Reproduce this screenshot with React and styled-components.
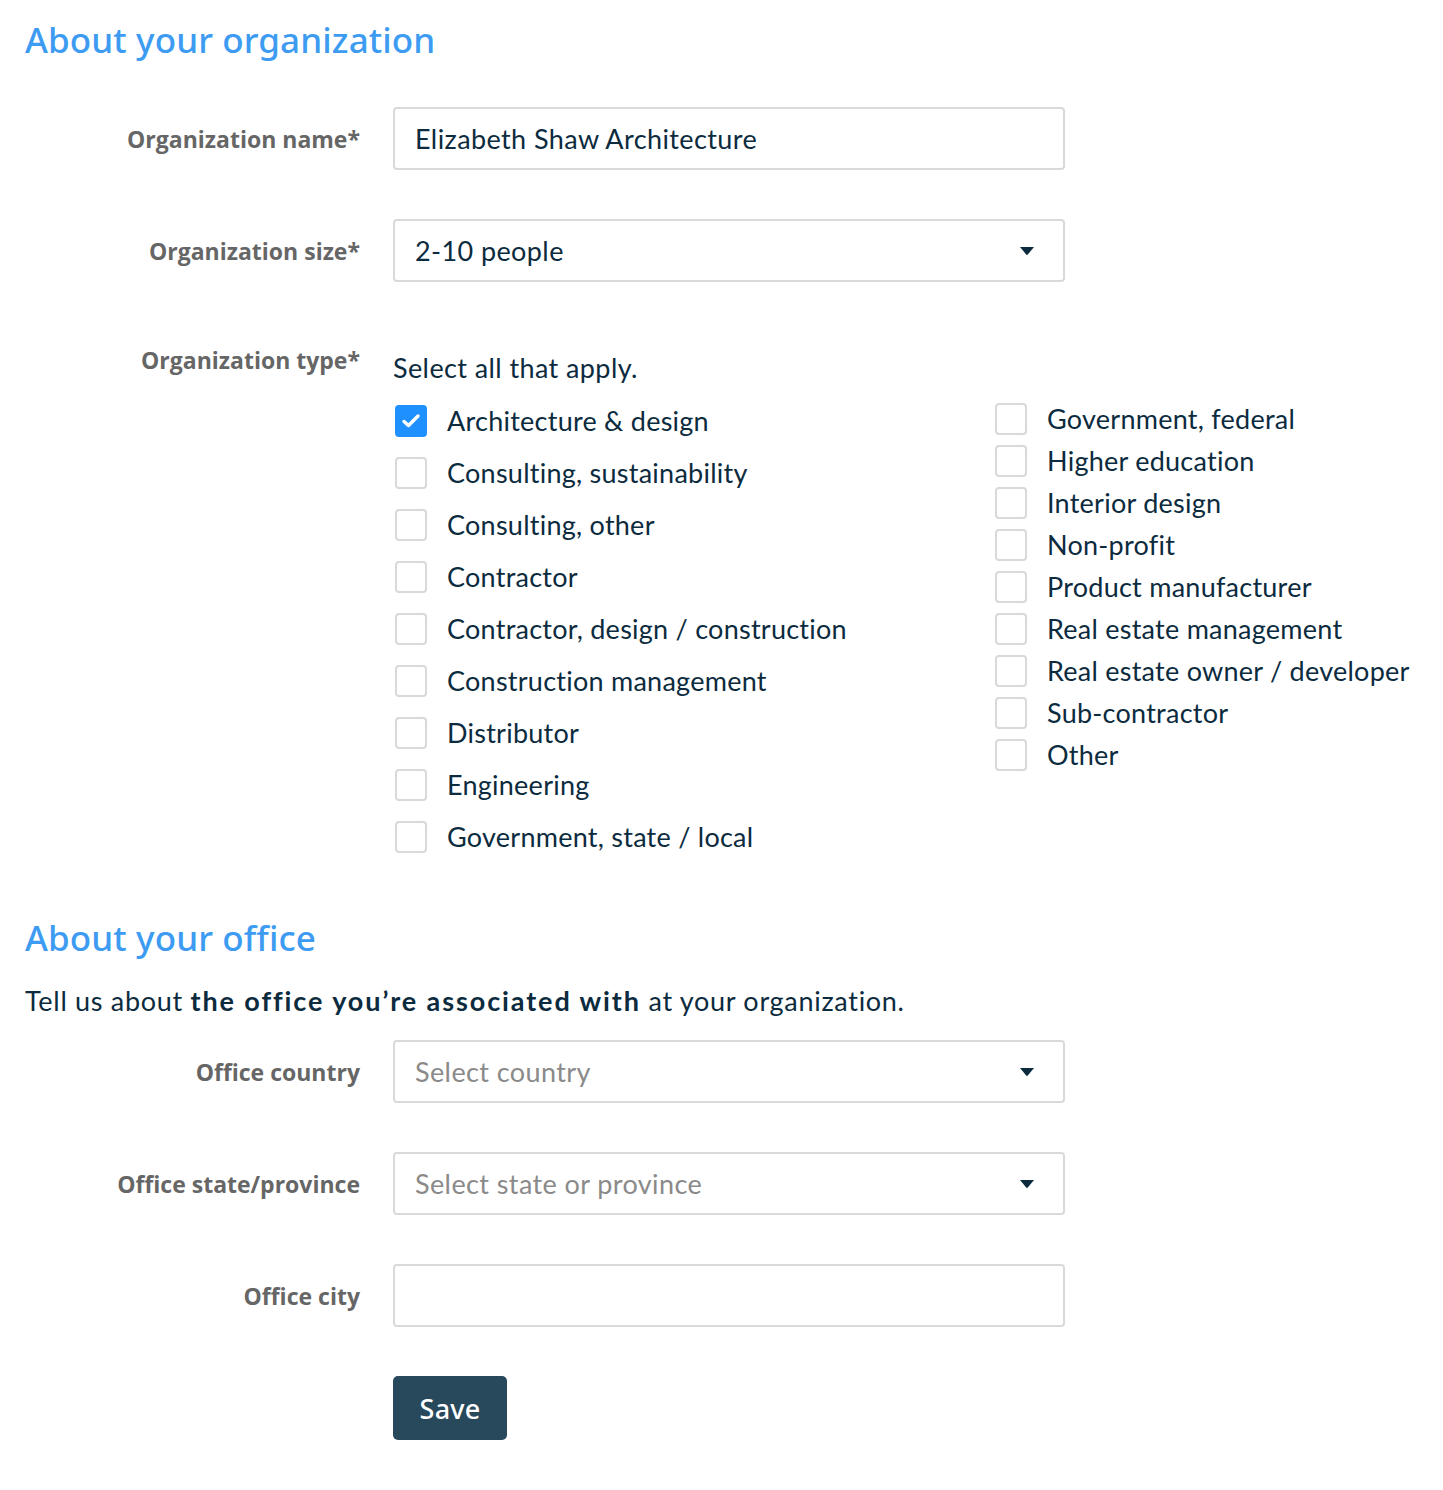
import React, { useState } from "react";
import styled, { createGlobalStyle } from "styled-components";

const colors = {
  blue: "#3d9cf2",
  check: "#1e90ff",
  text: "#0c2b3e",
  label: "#666666",
  border: "#d9d9d9",
  placeholder: "#8a8a8a",
  button: "#27495b",
  white: "#ffffff",
};

const GlobalStyle = createGlobalStyle`
  body {
    margin: 0;
    background: ${colors.white};
    font-family: "Lato", "Noto Sans", sans-serif;
    color: ${colors.text};
    letter-spacing: 0.4px;
  }
`;

const Page = styled.div`
  width: 1443px;
  padding: 18px 0 40px 25px;
  box-sizing: border-box;
`;

const Heading = styled.h2`
  margin: ${({ $top }) => $top || 0}px 0 0;
  font-family: "Noto Sans", sans-serif;
  font-weight: 500;
  font-size: 35px;
  line-height: 44px;
  color: ${colors.blue};
  letter-spacing: 0.1px;
`;

const Form = styled.div`
  display: grid;
  grid-template-columns: 335px 672px;
  column-gap: 33px;
  row-gap: 49px;
  margin-top: ${({ $top }) => $top}px;
  align-items: center;
`;

const Label = styled.div`
  text-align: right;
  font-family: "Open Sans", sans-serif;
  font-weight: 700;
  font-size: 23px;
  letter-spacing: 0;
  color: ${colors.label};
  align-self: ${({ $top }) => ($top ? "start" : "center")};
  padding-top: ${({ $top }) => ($top ? "13px" : "0")};
`;

const Field = styled.div`
  position: relative;
  height: 63px;
  box-sizing: border-box;
  border: 2px solid ${colors.border};
  border-radius: 4px;
  display: flex;
  align-items: center;
  padding: 0 20px;
  font-size: 27px;
  color: ${({ $placeholder }) => ($placeholder ? colors.placeholder : colors.text)};
  background: ${colors.white};
`;

const Caret = styled.svg`
  position: absolute;
  right: 28px;
  top: 50%;
  margin-top: -5px;
`;

const TypeBlock = styled.div`
  align-self: start;
`;

const Hint = styled.div`
  font-size: 27px;
  line-height: 32px;
  margin-top: 21px;
`;

const Columns = styled.div`
  display: flex;
  width: 1030px;
  margin-top: 21px;
`;

const Column = styled.div`
  width: 600px;
  display: flex;
  flex-direction: column;
  gap: ${({ $gap }) => $gap}px;
  margin-top: ${({ $shift }) => $shift}px;
  &:last-child {
    width: auto;
  }
`;

const CheckRow = styled.label`
  display: flex;
  align-items: center;
  gap: 20px;
  font-size: 27px;
  line-height: 32px;
  letter-spacing: 0.25px;
  cursor: pointer;
`;

const Box = styled.span`
  width: 32px;
  height: 32px;
  box-sizing: border-box;
  margin-left: 2px;
  border-radius: 4px;
  border: 2px solid ${({ $on }) => ($on ? colors.check : colors.border)};
  background: ${({ $on }) => ($on ? colors.check : colors.white)};
  display: flex;
  align-items: center;
  justify-content: center;
  flex: none;
`;

const Intro = styled.p`
  margin: 25px 0 0;
  font-size: 27px;
  line-height: 32px;
  letter-spacing: 0.7px;
  strong {
    font-weight: 700;
    letter-spacing: 1.9px;
  }
`;

const SaveButton = styled.button`
  grid-column: 2;
  justify-self: start;
  width: 114px;
  height: 64px;
  border: none;
  border-radius: 5px;
  background: ${colors.button};
  color: ${colors.white};
  font-family: "Noto Sans", sans-serif;
  font-weight: 500;
  font-size: 27px;
  letter-spacing: 0.2px;
  cursor: pointer;
`;

const leftTypes = [
  "Architecture & design",
  "Consulting, sustainability",
  "Consulting, other",
  "Contractor",
  "Contractor, design / construction",
  "Construction management",
  "Distributor",
  "Engineering",
  "Government, state / local",
];

const rightTypes = [
  "Government, federal",
  "Higher education",
  "Interior design",
  "Non-profit",
  "Product manufacturer",
  "Real estate management",
  "Real estate owner / developer",
  "Sub-contractor",
  "Other",
];

const CaretIcon = () => (
  <Caret width="16" height="10" viewBox="0 0 16 10">
    <path d="M1 1 H15 L8.8 8.6 Q8 9.4 7.2 8.6 Z" fill={colors.text} />
  </Caret>
);

const Check = ({ label, checked, onToggle }) => (
  <CheckRow onClick={onToggle}>
    <Box $on={checked}>
      {checked && (
        <svg width="20" height="16" viewBox="0 0 20 16">
          <path
            d="M3 8.5 L7.5 12.5 L17 3"
            fill="none"
            stroke="#fff"
            strokeWidth="3.4"
            strokeLinecap="round"
            strokeLinejoin="round"
          />
        </svg>
      )}
    </Box>
    {label}
  </CheckRow>
);

const App = () => {
  const [selected, setSelected] = useState({ "Architecture & design": true });
  const toggle = (name) => setSelected((s) => ({ ...s, [name]: !s[name] }));

  return (
    <Page>
      <GlobalStyle />
      <Heading>About your organization</Heading>
      <Form $top={45}>
        <Label>Organization name*</Label>
        <Field>Elizabeth Shaw Architecture</Field>
        <Label>Organization size*</Label>
        <Field>
          2-10 people
          <CaretIcon />
        </Field>
        <Label $top>Organization type*</Label>
        <TypeBlock>
          <Hint>Select all that apply.</Hint>
          <Columns>
            <Column $gap={20} $shift={0}>
              {leftTypes.map((t) => (
                <Check key={t} label={t} checked={!!selected[t]} onToggle={() => toggle(t)} />
              ))}
            </Column>
            <Column $gap={10} $shift={-2}>
              {rightTypes.map((t) => (
                <Check key={t} label={t} checked={!!selected[t]} onToggle={() => toggle(t)} />
              ))}
            </Column>
          </Columns>
        </TypeBlock>
      </Form>
      <Heading $top={63}>About your office</Heading>
      <Intro>
        Tell us about <strong>the office you’re associated with</strong> at your organization.
      </Intro>
      <Form $top={23}>
        <Label>Office country</Label>
        <Field $placeholder>
          Select country
          <CaretIcon />
        </Field>
        <Label>Office state/province</Label>
        <Field $placeholder>
          Select state or province
          <CaretIcon />
        </Field>
        <Label>Office city</Label>
        <Field />
        <SaveButton>Save</SaveButton>
      </Form>
    </Page>
  );
};

export default App;
